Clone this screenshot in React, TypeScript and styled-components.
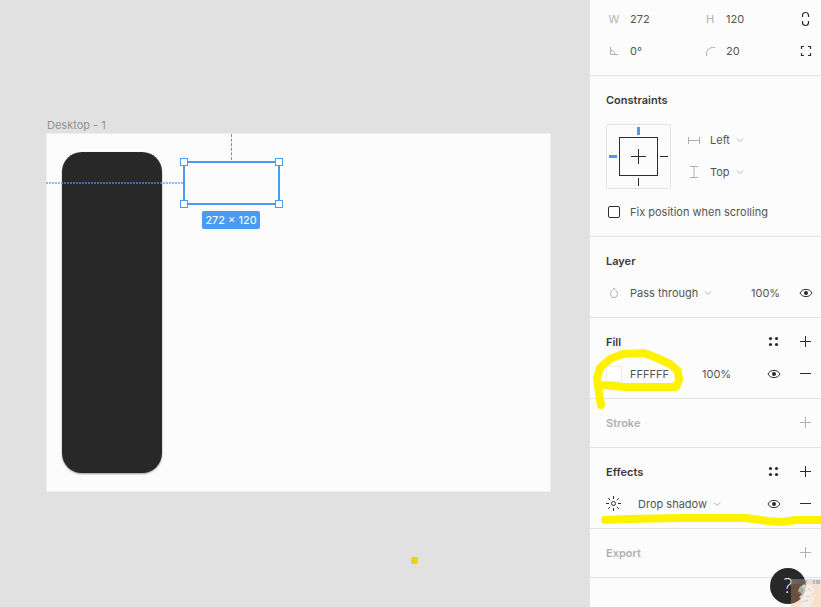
import React from "react";
import styled, { createGlobalStyle } from "styled-components";

const blue = "#4a9cf2";
const ink = "#2c2c2c";
const text = "#555555";
const faint = "#b0b0b0";
const line = "#e2e2e2";
const paper = "#fcfcfc";

const GlobalStyle = createGlobalStyle`
  * { box-sizing: border-box; }
  body { margin: 0; background: #e1e1e1; }
  body, button, input, select {
    font-family: Inter, "Liberation Sans", sans-serif;
    font-size: 11px;
    line-height: 16px;
    color: ${text};
  }
`;

const Page = styled.div`
  display: flex;
  min-height: 100vh;
  position: relative;
  overflow: hidden;
`;

/* Canvas */

const Canvas = styled.main`
  flex: 1;
  min-width: 0;
  position: relative;
  overflow: hidden;
  background: #e1e1e1;
`;

const FrameName = styled.div`
  position: absolute;
  left: 47px;
  top: 117px;
  color: #929292;
`;

const Artboard = styled.div`
  position: absolute;
  left: 46px;
  top: 133px;
  width: 505px;
  height: 359px;
  background: ${paper};
  border: 1px solid #eeeeee;
`;

const DarkCard = styled.div`
  position: absolute;
  left: 15px;
  top: 18px;
  width: 100px;
  height: 321px;
  border-radius: 20px;
  background: #282828;
  box-shadow: 0 1px 2px rgba(0, 0, 0, 0.4);
`;

const Guide = styled.div<{ $vertical?: boolean }>`
  position: absolute;
  ${(p) =>
    p.$vertical
      ? `left: 184px; top: 0; height: 26px; border-left: 1px dashed ${blue};`
      : `left: -1px; top: 48px; width: 137px; height: 2px;
         background: repeating-linear-gradient(90deg, ${blue} 0 2px, transparent 2px 3px); opacity: 0.65;`}
`;

const Selection = styled.div`
  position: absolute;
  left: 136px;
  top: 27px;
  width: 97px;
  height: 44px;
  border: 2px solid ${blue};
  border-radius: 4px;
`;

const Handle = styled.i<{ $x: "left" | "right"; $y: "top" | "bottom" }>`
  position: absolute;
  ${(p) => p.$x}: -5px;
  ${(p) => p.$y}: -5px;
  width: 8px;
  height: 8px;
  background: white;
  border: 1px solid ${blue};
`;

const SizeTag = styled.div`
  position: absolute;
  left: 155px;
  top: 77px;
  width: 58px;
  line-height: 18px;
  border-radius: 2px;
  background: ${blue};
  color: white;
  text-align: center;
  white-space: nowrap;
`;

const PenDot = styled.div`
  position: absolute;
  left: 411px;
  top: 557px;
  width: 7px;
  height: 7px;
  border-radius: 2px;
  background: #e5d800;
`;

/* Panel */

const Panel = styled.aside`
  flex: none;
  width: 232px;
  position: relative;
  background: ${paper};
  border-left: 1px solid ${line};
`;

const Section = styled.section<{ $first?: boolean }>`
  padding: ${(p) => (p.$first ? "3px" : "8px")} 0 8px 16px;
  border-bottom: 1px solid ${line};
`;

const Row = styled.div`
  display: flex;
  align-items: center;
  height: 32px;
`;

const Title = styled.h2<{ $off?: boolean }>`
  flex: 1;
  margin: 0;
  font-size: 11px;
  line-height: 16px;
  font-weight: 600;
  color: ${(p) => (p.$off ? faint : "#3a3a3a")};
`;

const Field = styled.label<{ $grow?: boolean; $gap?: number }>`
  display: flex;
  align-items: center;
  gap: ${(p) => p.$gap ?? 8}px;
  width: 96px;
  min-width: 0;
  ${(p) => p.$grow && "flex: 1;"}
`;

const Letter = styled.span`
  width: 16px;
  text-align: center;
  color: ${faint};
`;

const TextInput = styled.input<{ $width?: number }>`
  width: ${(p) => p.$width ?? 48}px;
  height: 16px;
  min-width: 0;
  padding: 0;
  border: 0;
  background: transparent;
`;

const Dropdown = styled.select`
  appearance: none;
  field-sizing: content;
  padding: 0;
  margin: 0;
  border: 0;
  background: transparent;
`;

const Picker = styled.span`
  display: flex;
  align-items: center;
  gap: 6px;
`;

const IconButton = styled.button`
  display: grid;
  place-items: center;
  flex: none;
  width: 32px;
  height: 32px;
  padding: 0;
  border: 0;
  background: transparent;
`;

const Svg = styled.svg<{ $faint?: boolean }>`
  display: block;
  flex: none;
  fill: none;
  stroke: ${(p) => (p.$faint ? faint : ink)};
`;

const ConstraintArea = styled.div`
  display: flex;
  gap: 15px;
  padding: 8px 0 7px;
`;

const Swatch = styled.button`
  width: 16px;
  height: 16px;
  padding: 0;
  border: 1px solid #ececec;
  background: white;
`;

const CheckLabel = styled.label`
  display: flex;
  align-items: center;
  gap: 10px;
  padding-left: 2px;
`;

const CheckBox = styled.input`
  appearance: none;
  width: 12px;
  height: 12px;
  margin: 0;
  border: 1px solid ${ink};
  border-radius: 2px;
`;

const Marker = styled.svg`
  position: absolute;
  left: 0;
  top: 0;
  width: 100%;
  height: 100%;
  fill: none;
  stroke: #fff200;
  stroke-width: 8;
  stroke-linecap: round;
  stroke-linejoin: round;
  pointer-events: none;
`;

const Help = styled.button`
  position: absolute;
  right: 15px;
  bottom: 3px;
  width: 36px;
  height: 36px;
  padding: 0;
  border: 0;
  border-radius: 50%;
  background: #282828;
  color: white;
  font-family: "Open Sans", "Noto Sans", sans-serif;
  font-size: 20px;
  font-weight: 300;
  line-height: 36px;
`;

const Watermark = styled.svg`
  position: absolute;
  right: 0;
  bottom: 0;
  pointer-events: none;
`;

const Icon = ({ faint: f, children }: { faint?: boolean; children: React.ReactNode }) => (
  <Svg $faint={f} width="16" height="16" viewBox="0 0 16 16" aria-hidden="true">
    {children}
  </Svg>
);

const Plus = ({ off }: { off?: boolean }) => (
  <Icon faint={off}><path d="M3 7.5h11M8.5 2v11" /></Icon>
);
const Minus = () => <Icon><path d="M3 7.5h11" /></Icon>;
const Dots = () => (
  <Icon>
    <g fill={ink} stroke="none">
      <circle cx="5.5" cy="4.5" r="1.6" /><circle cx="11.5" cy="4.5" r="1.6" />
      <circle cx="5.5" cy="10.5" r="1.6" /><circle cx="11.5" cy="10.5" r="1.6" />
    </g>
  </Icon>
);
const Eye = () => (
  <Icon>
    <path d="M3 8C4.3 5.6 6.4 4.4 9 4.4S13.7 5.6 15 8c-1.3 2.4-3.4 3.6-6 3.6S4.3 10.4 3 8z" />
    <circle cx="9" cy="8" r="2" fill={ink} stroke="none" />
  </Icon>
);
const Chevron = () => (
  <Svg $faint width="8" height="6" viewBox="0 0 8 6" aria-hidden="true">
    <path d="M1 1.5l3 3 3-3" />
  </Svg>
);

const Select = ({ label, options }: { label: string; options: string[] }) => (
  <Picker>
    <Dropdown aria-label={label}>
      {options.map((o) => <option key={o}>{o}</option>)}
    </Dropdown>
    <Chevron />
  </Picker>
);

const ConstraintDiagram = () => (
  <Svg width="65" height="65" viewBox="0 0 65 65" role="img" aria-label="Pinned top left">
    <rect x=".5" y=".5" width="64" height="64" rx="2" stroke={line} />
    <rect x="13.5" y="13.5" width="38" height="38" />
    <path d="M25 32.5h15M32.5 25v15M54 32.5h8M32.5 54v8" />
    <path d="M32.5 3v8M3 32.5h8" stroke={blue} strokeWidth="3" />
  </Svg>
);

export default function App() {
  return (
    <Page>
      <GlobalStyle />
      <Canvas>
        <FrameName>Desktop - 1</FrameName>
        <Artboard>
          <DarkCard />
          <Guide />
          <Guide $vertical />
          <Selection>
            <Handle $x="left" $y="top" />
            <Handle $x="right" $y="top" />
            <Handle $x="left" $y="bottom" />
            <Handle $x="right" $y="bottom" />
          </Selection>
          <SizeTag>272 × 120</SizeTag>
        </Artboard>
        <PenDot />
      </Canvas>

      <Panel>
        <Section $first>
          <Row>
            <Field><Letter>W</Letter><TextInput defaultValue="272" /></Field>
            <Field $grow><Letter>H</Letter><TextInput defaultValue="120" /></Field>
            <IconButton aria-label="Constrain proportions">
              <Icon><path d="M5.5 6V4.5a3 3 0 0 1 6 0V6M5.5 10v1.5a3 3 0 0 0 6 0V10" strokeWidth="1.2" /></Icon>
            </IconButton>
          </Row>
          <Row>
            <Field>
              <Icon faint><path d="M4.5 4v7.5H12M4.5 7A4.5 4.5 0 0 1 9 11.5" /></Icon>
              <TextInput aria-label="Rotation" defaultValue="0°" />
            </Field>
            <Field $grow>
              <Icon faint><path d="M4.5 13v-2.5a6 6 0 0 1 6-6H13" /></Icon>
              <TextInput aria-label="Corner radius" defaultValue="20" />
            </Field>
            <IconButton aria-label="Independent corners">
              <Icon><path d="M4.5 6V3.5H7M11 3.5h2.5V6M13.5 10v2.5H11M7 12.5H4.5V10" strokeWidth="1.2" /></Icon>
            </IconButton>
          </Row>
        </Section>

        <Section>
          <Row><Title>Constraints</Title></Row>
          <ConstraintArea>
            <ConstraintDiagram />
            <div>
              <Row>
                <Field>
                  <Icon faint><path d="M2.5 5v7M13.5 5v7M2.5 8.5h11" /></Icon>
                  <Select label="Horizontal constraint" options={["Left", "Right", "Center"]} />
                </Field>
              </Row>
              <Row>
                <Field>
                  <Icon faint><path d="M4 2.5h8M4 13.5h8M8 2.5v11" /></Icon>
                  <Select label="Vertical constraint" options={["Top", "Bottom", "Center"]} />
                </Field>
              </Row>
            </div>
          </ConstraintArea>
          <Row>
            <CheckLabel><CheckBox type="checkbox" />Fix position when scrolling</CheckLabel>
          </Row>
        </Section>

        <Section>
          <Row><Title>Layer</Title></Row>
          <Row>
            <Field $grow>
              <Icon faint><path d="M8 3C6.5 5 4.5 6.8 4.5 9.2a3.5 3.5 0 0 0 7 0C11.5 6.8 9.5 5 8 3z" /></Icon>
              <Select label="Blend mode" options={["Pass through", "Normal", "Multiply"]} />
            </Field>
            <TextInput aria-label="Layer opacity" defaultValue="100%" $width={38} />
            <IconButton aria-label="Toggle layer"><Eye /></IconButton>
          </Row>
        </Section>

        <Section>
          <Row>
            <Title>Fill</Title>
            <IconButton aria-label="Fill styles"><Dots /></IconButton>
            <IconButton aria-label="Add fill"><Plus /></IconButton>
          </Row>
          <Row>
            <Field as="div">
              <Swatch aria-label="Fill colour" />
              <TextInput aria-label="Fill hex" defaultValue="FFFFFF" />
            </Field>
            <Field $grow><TextInput aria-label="Fill opacity" defaultValue="100%" /></Field>
            <IconButton aria-label="Toggle fill"><Eye /></IconButton>
            <IconButton aria-label="Remove fill"><Minus /></IconButton>
          </Row>
        </Section>

        <Section>
          <Row>
            <Title $off>Stroke</Title>
            <IconButton aria-label="Add stroke"><Plus off /></IconButton>
          </Row>
        </Section>

        <Section>
          <Row>
            <Title>Effects</Title>
            <IconButton aria-label="Effect styles"><Dots /></IconButton>
            <IconButton aria-label="Add effect"><Plus /></IconButton>
          </Row>
          <Row>
            <Field $grow $gap={16}>
              <Icon>
                <circle cx="7.5" cy="7.5" r="2" />
                <path d="M7.5 0v3M7.5 12v3M0 7.5h3M12 7.5h3M2.2 2.2l2 2M10.8 10.8l2 2M12.8 2.2l-2 2M4.2 10.8l-2 2" />
              </Icon>
              <Select label="Effect type" options={["Drop shadow", "Inner shadow", "Layer blur"]} />
            </Field>
            <IconButton aria-label="Toggle effect"><Eye /></IconButton>
            <IconButton aria-label="Remove effect"><Minus /></IconButton>
          </Row>
        </Section>

        <Section>
          <Row>
            <Title $off>Export</Title>
            <IconButton aria-label="Add export"><Plus off /></IconButton>
          </Row>
        </Section>

        <Marker aria-hidden="true">
          <path d="M11 405L9 393L7 378L10 368L20 359L33 354L54 353L67 358L80 364L88 371L89 380L86 387H34L11 385" />
          <path d="M15 520L37 519L92 518L156 518L178 521L192 522L206 520L234 520" />
        </Marker>
      </Panel>

      <Help aria-label="Help">?</Help>
      <Watermark width="30" height="28" viewBox="0 0 30 28" aria-hidden="true">
        <rect width="30" height="5" fill="#b9b5ac" opacity=".4" />
        <path d="M1 1v4M4 1v4M1 3h3M15 1v3M23 1v4M26 1v4M28 1v4" stroke="#777" opacity=".7" />
        <rect y="5" width="30" height="23" fill="#f0a36c" opacity=".32" />
        <path d="M9 8l4-3 3 2 5-1 2 5-3 4 3 5-3 8H9l3-6-4-4 3-3-4-3z" fill="#f4f1ec" opacity=".75" />
        <path d="M10 7l3 4-2 5-4-3zM15 18l4-1M12 23l5-2M17 9l3 3" fill="#777" stroke="#999" opacity=".4" />
      </Watermark>
    </Page>
  );
}
